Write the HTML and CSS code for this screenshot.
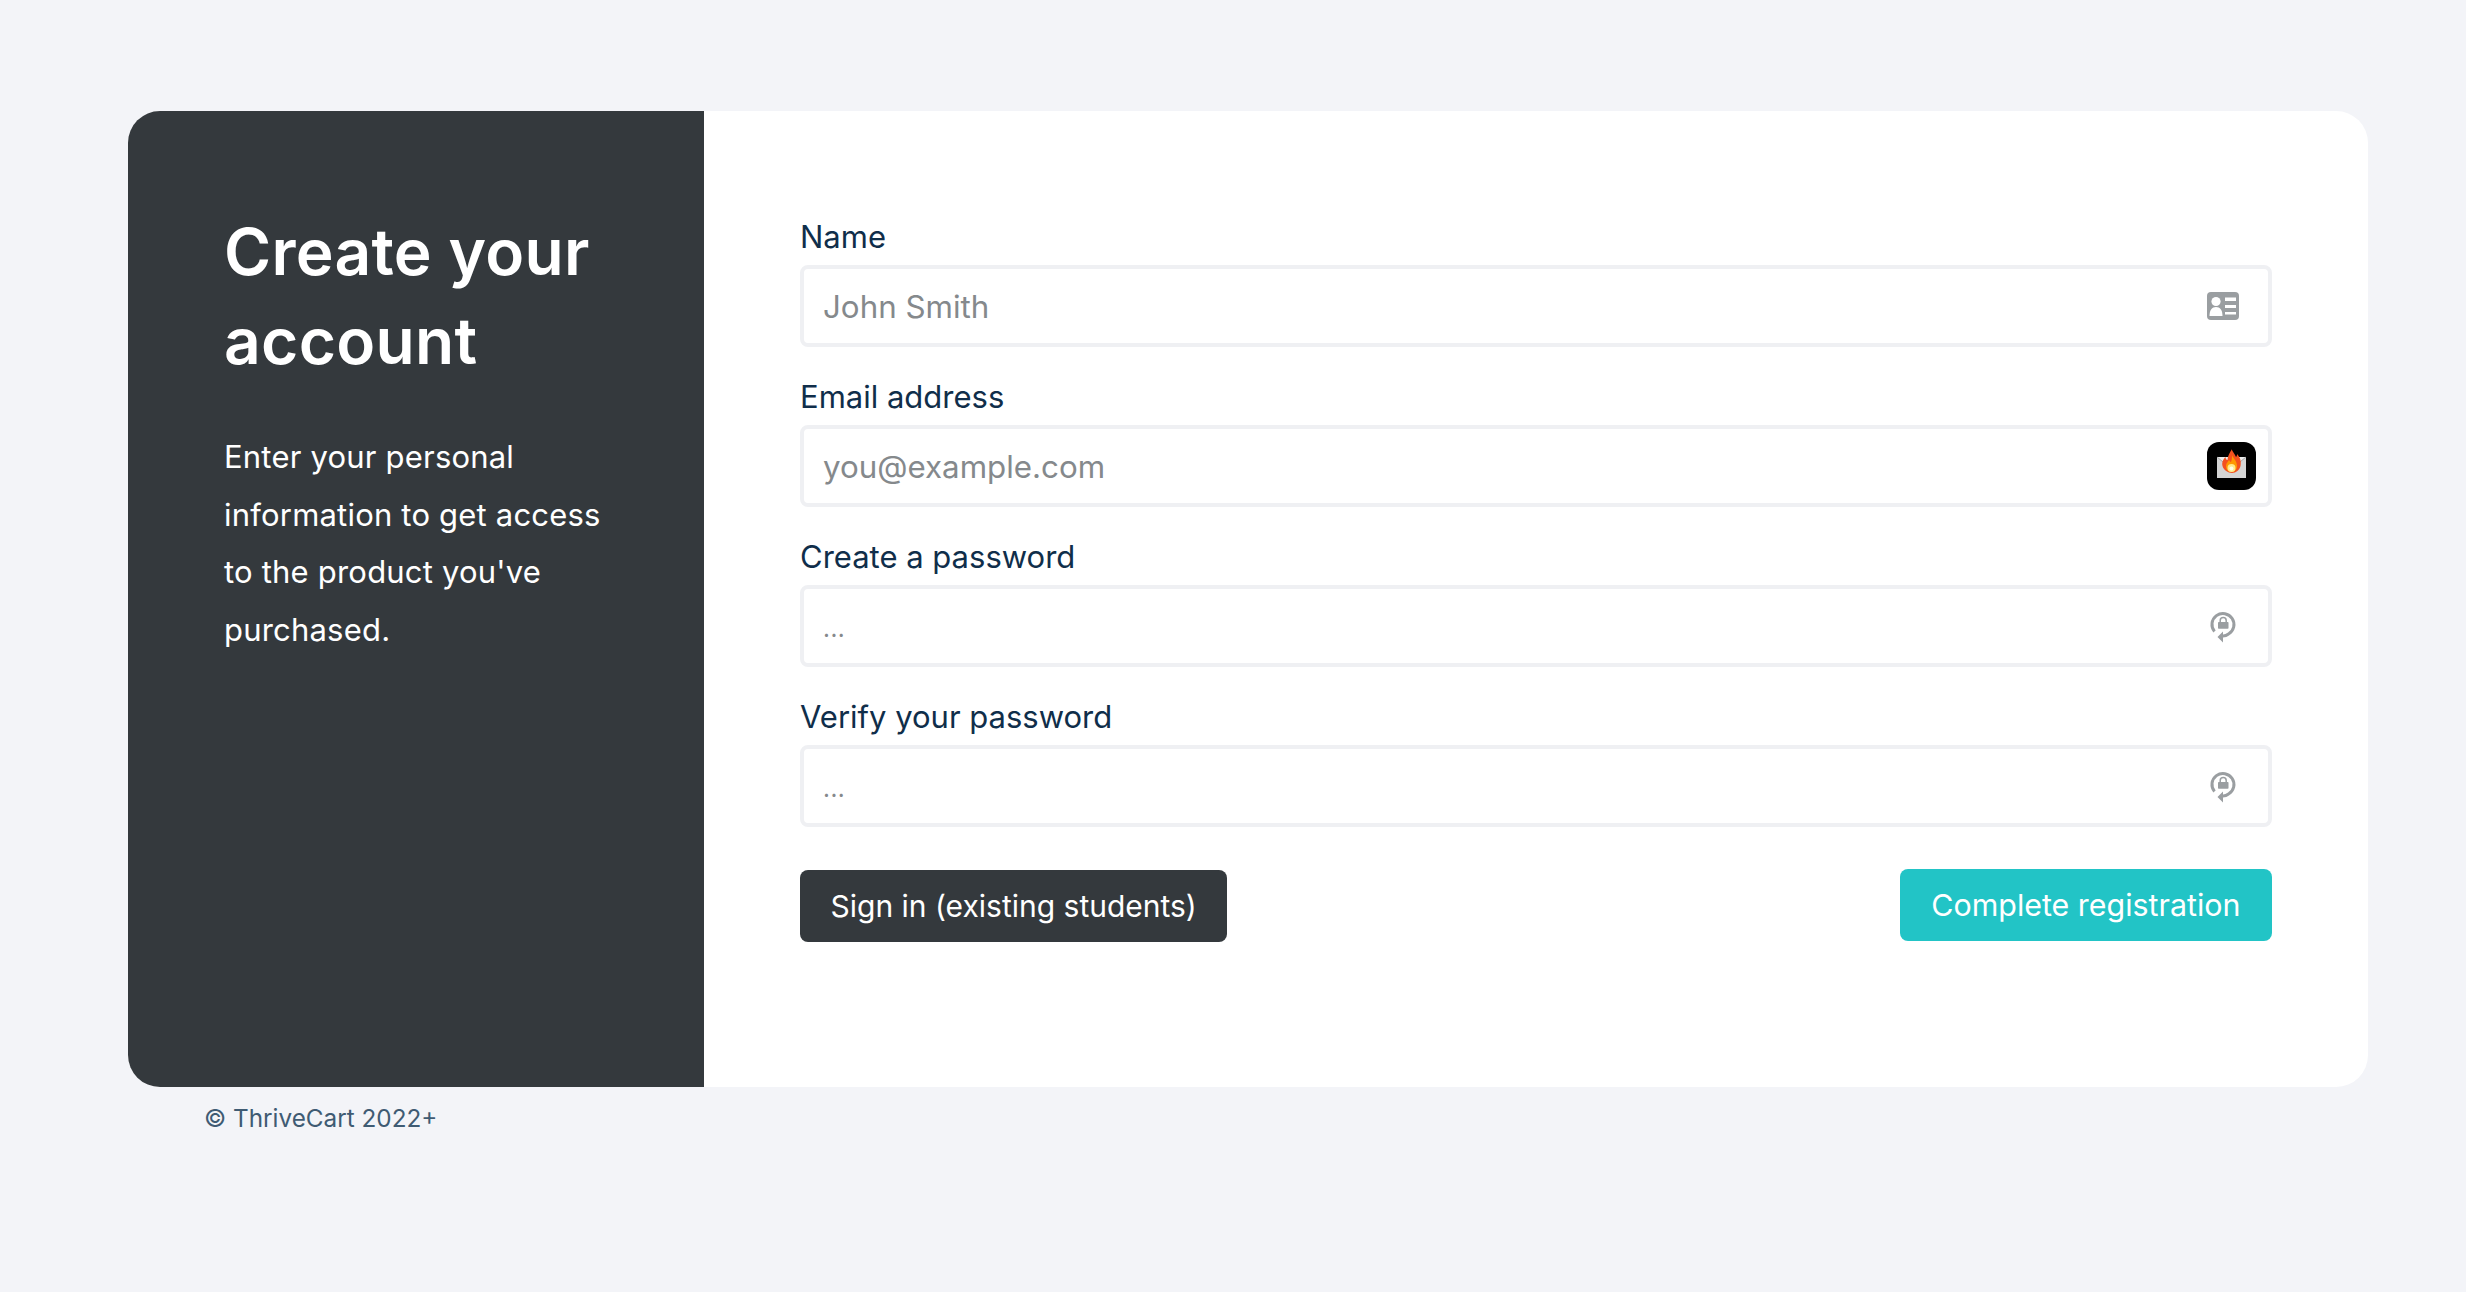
FILE: index.html
```html
<!DOCTYPE html>
<html lang="en">
<head>
<meta charset="utf-8">
<title>Create your account</title>
<link rel="stylesheet" href="styles.css">
</head>
<body>
<main class="card">
  <aside class="intro">
    <h1 class="intro-title">Create your account</h1>
    <p class="intro-text">Enter your personal information to get access to the product you've purchased.</p>
  </aside>
  <form class="form">
    <div class="field">
      <label class="field-label" for="name">Name</label>
      <div class="input-box">
        <input class="input" id="name" type="text" placeholder="John Smith">
        <svg class="icon-id" viewBox="0 0 32 28" aria-hidden="true">
          <rect width="32" height="28" rx="4" fill="#9a9ea1"/>
          <circle cx="9" cy="9.500" r="4.600" fill="#fff"/>
          <path d="M2.500 24c0-6 2.500-9 6.500-9s6.500 3 6.500 9z" fill="#fff"/>
          <path d="M18 5.500h11v3.500H18zM18 13h11v3H18zM18 20h11v2.500H18z" fill="#fff"/>
        </svg>
      </div>
    </div>
    <div class="field">
      <label class="field-label" for="email">Email address</label>
      <div class="input-box">
        <input class="input" id="email" type="email" placeholder="you@example.com">
        <svg class="icon-mail" viewBox="0 0 49 48" aria-hidden="true">
          <rect width="49" height="48" rx="12" fill="#000"/>
          <rect x="10" y="15" width="29" height="21" fill="#d4d4d4"/>
          <path d="M10 15l14.500 12L39 15" fill="#ececec" stroke="#a8a8a8" stroke-width="1"/>
          <path d="M24.500 7c1 3 3.500 5 4.500 8 1-1 1-2 1-3 3 3 4.500 7 3.500 12-1 4-4.500 7-8.500 7s-8.500-3-9.500-7c-1-4 1-7 3-9 0 2 1 3 2 3 0-4 2.500-8 4.500-11z" fill="#f4511e"/>
          <path d="M25 13c1 3 5 6 5 11 0 4-3 6-5.500 6S19 28 19 24c0-3 2-4 3-6 1 1 1 2 2 2 1-2 1-5 1-7z" fill="#ff9800"/>
          <circle cx="24.500" cy="26" r="4" fill="#ffe98a"/>
          <circle cx="24.500" cy="26.500" r="2" fill="#fffde7"/>
        </svg>
      </div>
    </div>
    <div class="field">
      <label class="field-label" for="password">Create a password</label>
      <div class="input-box">
        <input class="input input-secret" id="password" type="text" placeholder="...">
        <svg class="icon-lock" viewBox="0 0 30 34" aria-hidden="true">
          <path d="M6.500 22.500A11 11 0 1 1 20.500 25Q18 27 15 27" fill="none" stroke="#9a9ea1" stroke-width="3"/>
          <path d="M9.500 28l5.500-5.500v11z" fill="#9a9ea1"/>
          <rect x="10" y="13" width="10.500" height="6.700" rx="0.800" fill="#9a9ea1"/>
          <path d="M12.200 13V11.500a3 3 0 0 1 6 0V13" fill="none" stroke="#9a9ea1" stroke-width="1.500"/>
        </svg>
      </div>
    </div>
    <div class="field">
      <label class="field-label" for="verify">Verify your password</label>
      <div class="input-box">
        <input class="input input-secret" id="verify" type="text" placeholder="...">
        <svg class="icon-lock" viewBox="0 0 30 34" aria-hidden="true">
          <path d="M6.500 22.500A11 11 0 1 1 20.500 25Q18 27 15 27" fill="none" stroke="#9a9ea1" stroke-width="3"/>
          <path d="M9.500 28l5.500-5.500v11z" fill="#9a9ea1"/>
          <rect x="10" y="13" width="10.500" height="6.700" rx="0.800" fill="#9a9ea1"/>
          <path d="M12.200 13V11.500a3 3 0 0 1 6 0V13" fill="none" stroke="#9a9ea1" stroke-width="1.500"/>
        </svg>
      </div>
    </div>
    <div class="actions">
      <button class="btn btn-dark" type="button">Sign in (existing students)</button>
      <button class="btn btn-teal" type="submit">Complete registration</button>
    </div>
  </form>
</main>
<footer class="footer">© ThriveCart 2022+</footer>
</body>
</html>
```
FILE: styles.css
```css
* { box-sizing: border-box; }
html, body { margin: 0; height: 100%; }
body {
  background: #f3f4f8;
  padding: 111px 98px 0 128px;
  font-family: Inter, "Noto Sans", sans-serif;
  overflow: hidden;
}
.card {
  display: flex;
  height: 976px;
  background: #fff;
  border-radius: 32px;
  overflow: hidden;
}
.intro {
  flex: 0 0 576px;
  background: #34393d;
  color: #fff;
  padding: 96px 96px 0 96px;
}
.intro-title {
  margin: 0;
  font-size: 64px;
  line-height: 89px;
  font-weight: 600;
  letter-spacing: 0.3px;
}
.intro-text {
  margin: 43px 0 0;
  font-size: 31px;
  line-height: 57.600px;
  font-weight: 400;
  letter-spacing: 0.2px;
}
.form {
  flex: 1;
  padding: 106px 96px 0;
}
.field { margin-bottom: 30px; }
.field-label {
  display: block;
  font-size: 31px;
  line-height: 39px;
  padding-bottom: 9px;
  color: #102e4a;
}
.input-box {
  display: flex;
  align-items: center;
  height: 82px;
  padding: 0 12px 0 19px;
  border: 4px solid #eff0f3;
  border-radius: 8px;
  background: #fff;
}
.input {
  flex: 1;
  min-width: 0;
  border: 0;
  outline: 0;
  padding: 1px 0 0;
  background: transparent;
  font: inherit;
  font-size: 31.300px;
  color: #102e4a;
}
.input::placeholder { color: #85898c; opacity: 1; }
.input-secret { padding-top: 4px; font-size: 24px; letter-spacing: 0.5px; }
.icon-id { width: 32px; height: 28px; margin-right: 17px; flex: none; }
.icon-mail { width: 49px; height: 48px; flex: none; }
.icon-lock { width: 30px; height: 34px; margin-right: 18px; flex: none; }
.actions {
  display: flex;
  justify-content: space-between;
  align-items: flex-start;
  margin-top: 43px;
}
.btn {
  border: 0;
  border-radius: 8px;
  height: 72px;
  padding: 0 30.500px;
  color: #fff;
  font: inherit;
  font-size: 30px;
}
.btn-dark { background: #34393d; }
.btn-teal { background: #22c4c6; margin-top: -1px; font-size: 30.400px; padding: 0 31.500px; }
.footer {
  padding: 13px 0 0 76px;
  font-size: 24.300px;
  line-height: 36px;
  color: #3f5b73;
}
```
